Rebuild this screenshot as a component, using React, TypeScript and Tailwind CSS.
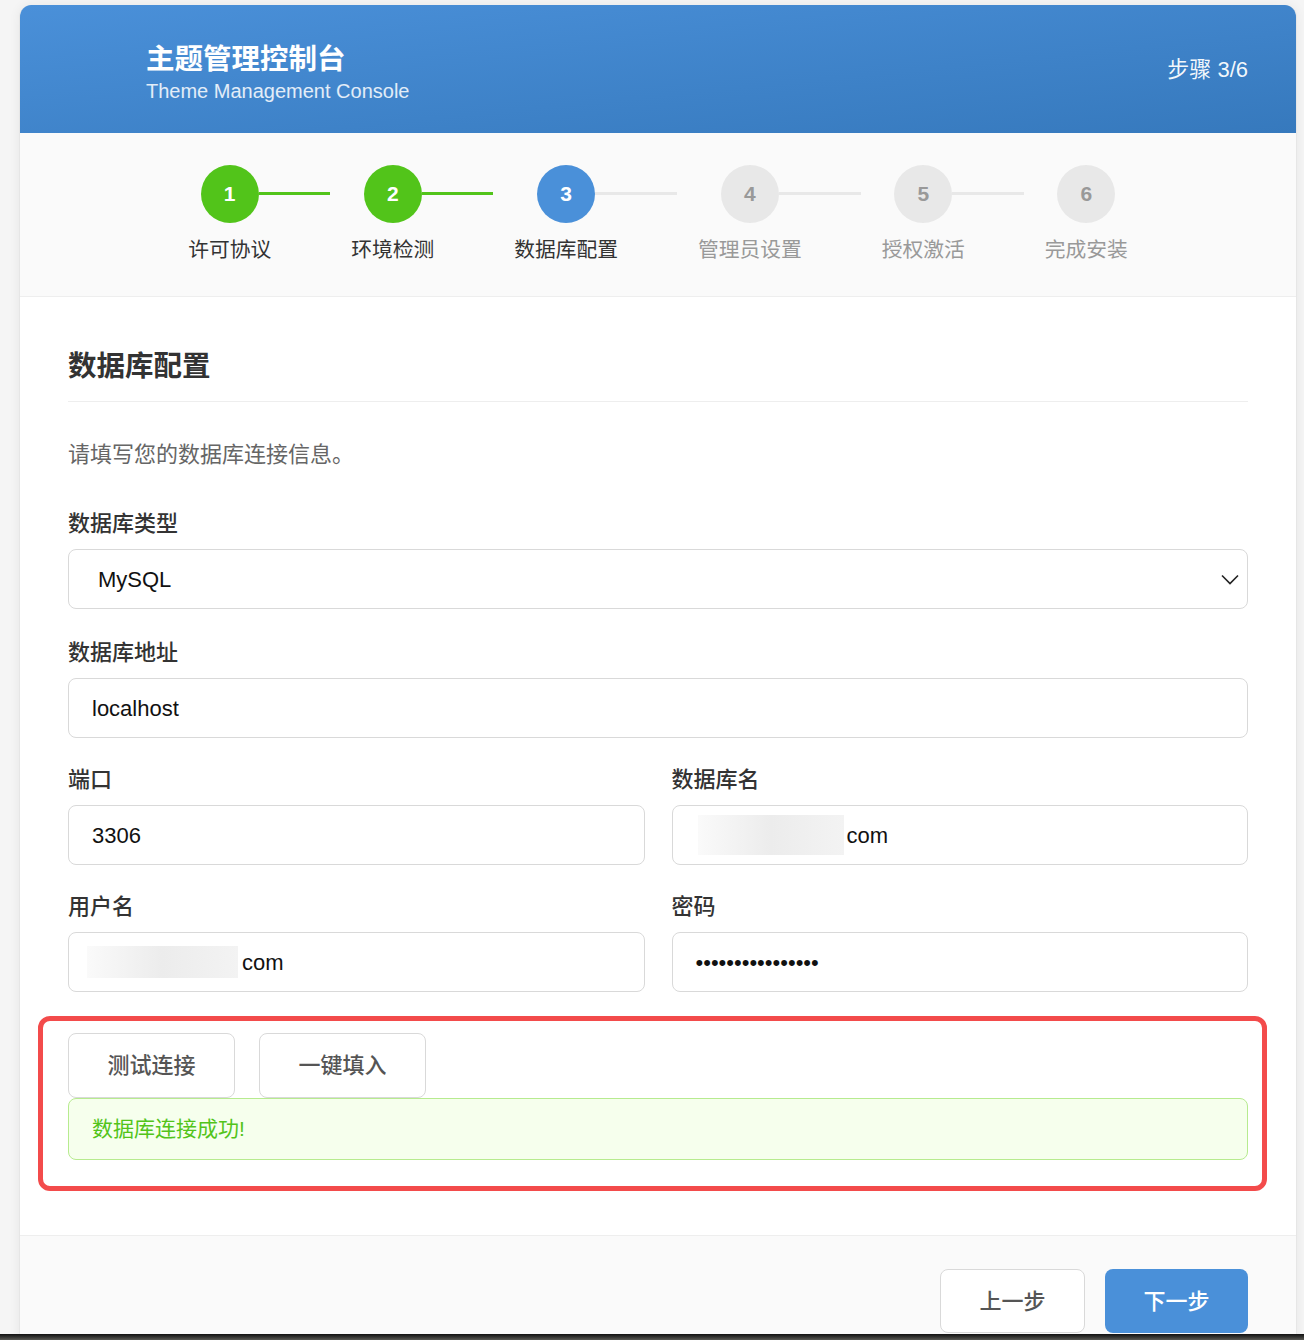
import React from 'react';

const steps = [
  { id: 1, label: '许可协议', status: 'done' },
  { id: 2, label: '环境检测', status: 'done' },
  { id: 3, label: '数据库配置', status: 'active' },
  { id: 4, label: '管理员设置', status: 'pending' },
  { id: 5, label: '授权激活', status: 'pending' },
  { id: 6, label: '完成安装', status: 'pending' },
];

const Redacted: React.FC<{ w: string; h: string }> = ({ w, h }) => (
  <span className={`inline-block ${w} ${h} bg-linear-to-r from-[#fafafa] via-[#ececec] to-[#f3f3f3]`} />
);

const Field: React.FC<{ label: string; children: React.ReactNode; className?: string }> = ({ label, children, className }) => (
  <div className={className}>
    <div className="text-[22px] leading-[28px] font-medium text-[#333] mb-[11px]">{label}</div>
    {children}
  </div>
);

const boxBase = 'h-[60px] w-full rounded-[8px] border border-[#d9d9d9] bg-white flex items-center text-[22px] text-[#111]';

const App: React.FC = () => {
  return (
    <div className="h-[1340px] overflow-hidden flex flex-col bg-[#f5f5f5] font-['Liberation_Sans','Noto_Sans_CJK_SC',sans-serif]">
      <div className="flex-1 overflow-hidden pt-[5px]">
        <div className="ml-[19px] w-[1278px] bg-white rounded-t-[12px] overflow-hidden border-x border-[#e6e6e6] shadow-[0_0_12px_rgba(0,0,0,0.06)]">
          {/* Header */}
          <div className="h-[128px] flex items-center justify-between pl-[126px] pr-[48px] bg-linear-to-br from-[#4a90d9] to-[#3679bd] text-white">
            <div className="pt-[6px]">
              <div className="text-[28.5px] leading-[36px] font-bold">主题管理控制台</div>
              <div className="mt-[2px] text-[20px] leading-[24px] text-white/85">Theme Management Console</div>
            </div>
            <div className="text-[22px] text-white/95">步骤 3/6</div>
          </div>

          {/* Steps */}
          <div className="bg-[#fafafa] border-b border-[#eeeeee] pt-[32px] pb-[32px] flex justify-center gap-[80px]">
            {steps.map((s, i) => {
              const circle =
                s.status === 'done'
                  ? 'bg-[#52c41a] text-white'
                  : s.status === 'active'
                  ? 'bg-[#4a90d9] text-white'
                  : 'bg-[#e8e8e8] text-[#999]';
              const lineColor = s.status === 'done' ? 'bg-[#52c41a]' : 'bg-[#e8e8e8]';
              return (
                <div key={s.id} className="relative flex flex-col items-center">
                  {i < steps.length - 1 && (
                    <div className={`absolute top-[27px] h-[3px] left-[calc(50%+29px)] right-[-59px] ${lineColor}`} />
                  )}
                  <div className={`w-[58px] h-[58px] rounded-full flex items-center justify-center text-[21px] font-bold ${circle}`}>
                    {s.id}
                  </div>
                  <div className={`mt-[13px] text-[20.75px] leading-[28px] whitespace-nowrap ${s.status === 'pending' ? 'text-[#999]' : 'text-[#333]'}`}>
                    {s.label}
                  </div>
                </div>
              );
            })}
          </div>

          {/* Content */}
          <div className="px-[48px] pt-[49px] pb-[44px]">
            <h2 className="text-[28.5px] leading-[40px] font-bold text-[#333] pb-[15px] border-b border-[#eeeeee]">数据库配置</h2>
            <p className="mt-[39px] mb-[41px] text-[22px] leading-[28px] text-[#666]">请填写您的数据库连接信息。</p>

            <Field label="数据库类型" className="mb-[30px]">
              <div className={`${boxBase} pl-[29px] pr-[8px] justify-between`}>
                <span>MySQL</span>
                <svg width="18" height="11" viewBox="0 0 18 11" fill="none">
                  <polyline points="1,1.5 9,9.5 17,1.5" stroke="#222" strokeWidth="1.6" />
                </svg>
              </div>
            </Field>

            <Field label="数据库地址" className="mb-[28px]">
              <div className={`${boxBase} pl-[23px]`}>localhost</div>
            </Field>

            <div className="grid grid-cols-2 gap-x-[27px]">
              <Field label="端口" className="mb-[28px]">
                <div className={`${boxBase} pl-[23px]`}>3306</div>
              </Field>
              <Field label="数据库名" className="mb-[28px]">
                <div className={`${boxBase} pl-[25px]`}>
                  <Redacted w="w-[146px]" h="h-[40px]" />
                  <span className="ml-[3px]">com</span>
                </div>
              </Field>
              <Field label="用户名">
                <div className={`${boxBase} pl-[18px]`}>
                  <Redacted w="w-[151px]" h="h-[32px]" />
                  <span className="ml-[4px]">com</span>
                </div>
              </Field>
              <Field label="密码">
                <div className={`${boxBase} pl-[23px] text-[#111]`}>
                  <span className="text-[22px]">••••••••••••••••</span>
                </div>
              </Field>
            </div>

            {/* Highlighted actions */}
            <div className="mt-[24px] -ml-[30px] -mr-[19px] border-[5px] border-[#f34b4b] rounded-[12px] pl-[25px] pr-[14px] pt-[12px] pb-[26px]">
              <div className="flex gap-[24px]">
                <button className="w-[167px] h-[65px] rounded-[8px] border border-[#d9d9d9] bg-white text-[22px] font-medium text-[#555]">
                  测试连接
                </button>
                <button className="w-[167px] h-[65px] rounded-[8px] border border-[#d9d9d9] bg-white text-[22px] font-medium text-[#555]">
                  一键填入
                </button>
              </div>
              <div className="h-[62px] rounded-[8px] border border-[#b7eb8f] bg-[#f6ffed] flex items-center pl-[23px] text-[21px] text-[#52c41a]">
                数据库连接成功!
              </div>
            </div>
          </div>

          {/* Footer */}
          <div className="bg-[#fafafa] border-t border-[#eeeeee] pt-[33px] pb-[32px] px-[48px] flex justify-end gap-[20px]">
            <button className="w-[145px] h-[64px] rounded-[8px] border border-[#d9d9d9] bg-white text-[22px] font-medium text-[#555]">
              上一步
            </button>
            <button className="w-[143px] h-[64px] rounded-[8px] bg-[#4a90d9] text-[22px] font-medium text-white">
              下一步
            </button>
          </div>
        </div>
      </div>
      <div className="h-[6px] bg-linear-to-b from-[#111] to-[#5a5a55]" />
    </div>
  );
};

export default App;
